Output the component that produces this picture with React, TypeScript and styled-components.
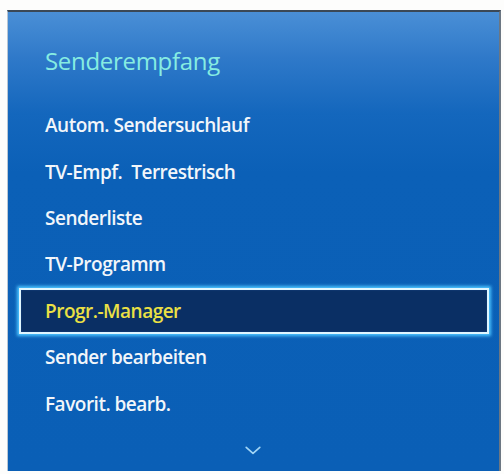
import React from 'react';
import styled, { createGlobalStyle } from 'styled-components';

const GlobalStyle = createGlobalStyle`
  html, body {
    margin: 0;
    padding: 0;
    background: #fdfdfc;
  }
  body {
    font-family: "Open Sans", "Noto Sans", sans-serif;
  }
`;

const Page = styled.div`
  width: 504px;
  height: 474px;
  padding: 10px 3px 3px 7px;
  box-sizing: border-box;
`;

const Panel = styled.div`
  width: 494px;
  height: 461px;
  box-sizing: border-box;
  border-top: 2px solid #3b4856;
  border-right: 2px solid #6c7783;
  border-left: 1px solid #b9c6d3;
  background: linear-gradient(
    180deg,
    #4a8fd6 0%,
    #2f79c9 10%,
    #1467bd 22%,
    #0b60b7 35%,
    #0a5fb6 100%
  );
  display: flex;
  flex-direction: column;
`;

const Title = styled.div`
  padding: 34px 0 0 37px;
  height: 30px;
  line-height: 30px;
  font-size: 24px;
  font-weight: 500;
  color: #86ece2;
  letter-spacing: -0.3px;
`;

const Menu = styled.ul`
  list-style: none;
  margin: 26px 10px 0 11px;
  padding: 0;
  display: flex;
  flex-direction: column;
`;

const Item = styled.li<{ $active?: boolean }>`
  height: 46.4px;
  box-sizing: border-box;
  display: flex;
  align-items: center;
  white-space: pre;
  padding-left: ${({ $active }) => ($active ? '24px' : '26px')};
  font-size: 19px;
  font-weight: 600;
  letter-spacing: -0.5px;
  color: ${({ $active }) => ($active ? '#ebe044' : '#f2f6fa')};
  background: ${({ $active }) => ($active ? '#0a2f64' : 'transparent')};
  border: ${({ $active }) => ($active ? '2px solid #dff6ff' : 'none')};
  box-shadow: ${({ $active }) =>
    $active ? '0 0 3px 2px #4cc4ff, inset 0 0 2px #1b4a8a' : 'none'};
`;

const More = styled.div`
  flex: 1;
  display: flex;
  justify-content: center;
  align-items: center;
  padding-top: 4px;
  padding-right: 2px;
`;

const items = [
  'Autom. Sendersuchlauf',
  'TV-Empf.  Terrestrisch',
  'Senderliste',
  'TV-Programm',
  'Progr.-Manager',
  'Sender bearbeiten',
  'Favorit. bearb.',
];

const App: React.FC = () => (
  <>
    <GlobalStyle />
    <Page>
      <Panel>
        <Title>Senderempfang</Title>
        <Menu>
          {items.map((label, i) => (
            <Item key={label} $active={i === 4}>
              {label}
            </Item>
          ))}
        </Menu>
        <More>
          <svg width="16" height="9" viewBox="0 0 16 9">
            <path
              d="M1.2 1.4 L8 7.4 L14.8 1.4"
              fill="none"
              stroke="#a3d6f6"
              strokeWidth="1.7"
              strokeLinecap="round"
              strokeLinejoin="round"
            />
          </svg>
        </More>
      </Panel>
    </Page>
  </>
);

export default App;
